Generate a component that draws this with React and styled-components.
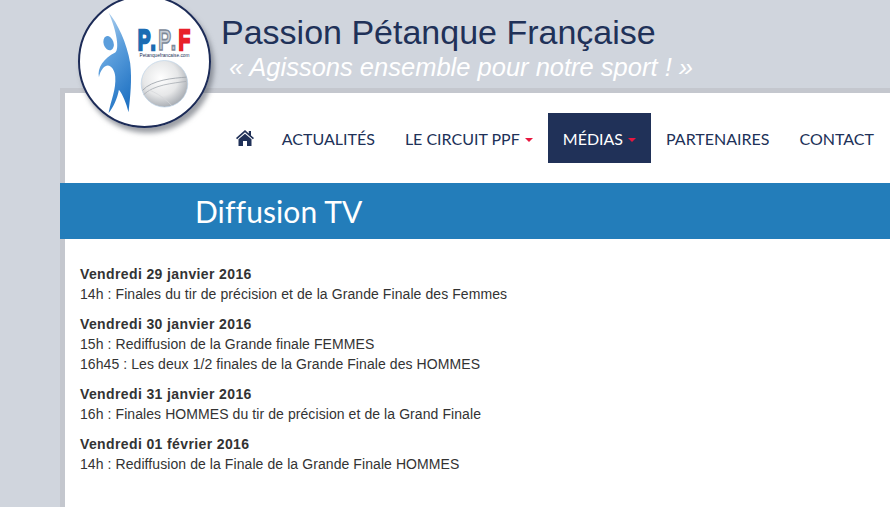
import React from "react";
import styled, { createGlobalStyle } from "styled-components";

const Global = createGlobalStyle`
  html, body { margin: 0; padding: 0; background: #d0d5dd; overflow: hidden; }
  body { font-family: "Liberation Sans", Arial, sans-serif; }
`;

const Page = styled.div`
  position: relative;
  min-height: 100vh;
  display: flex;
  flex-direction: column;
`;

const Header = styled.header`
  height: 88px;
  padding-left: 221px;
  box-sizing: border-box;
  display: flex;
  flex-direction: column;
`;

const SiteTitle = styled.h1`
  margin: 12px 0 0;
  font: 400 34px/40px "Liberation Sans", Arial, sans-serif;
  color: #203158;
`;

const Slogan = styled.p`
  margin: 0 0 0 8px;
  font: italic 400 25.5px/30px "Liberation Sans", Arial, sans-serif;
  color: #fff;
`;

const Logo = styled.div`
  position: absolute;
  left: 78px;
  top: -5px;
  width: 133px;
  height: 133px;
  border-radius: 50%;
  box-shadow: 3px 5px 5px rgba(90, 95, 105, 0.6);
  svg { display: block; }
`;

const Wrapper = styled.div`
  flex: 1;
  margin-left: 60px;
  border-top: 5px solid #c4c7ce;
  border-left: 5px solid #c4c7ce;
  background: #fff;
`;

const Nav = styled.nav`
  display: flex;
  justify-content: flex-end;
  padding: 20px 1px 20px 0;
`;

const NavItem = styled.a`
  display: flex;
  align-items: center;
  height: 50px;
  box-sizing: border-box;
  padding: 1px 15px 0;
  font: 400 16px/49px Lato, sans-serif;
  color: ${(p) => (p.$active ? "#fff" : "#203158")};
  background: ${(p) => (p.$active ? "#203158" : "transparent")};
`;

const HomeLink = styled(NavItem)`
  padding: 0 13px 0 17px;
`;

const Caret = styled.span`
  width: 0;
  height: 0;
  margin: 2px 0 0 5px;
  border-top: 4px solid #e8173f;
  border-left: 4px solid transparent;
  border-right: 4px solid transparent;
`;

const Band = styled.div`
  margin-left: -5px;
  height: 56px;
  padding-left: 135px;
  background: #237dba;
  color: #fff;
  font: 400 30px/56px Lato, sans-serif;
  letter-spacing: 0.1px;
`;

const Content = styled.main`
  padding: 25px 15px 0;
  font-size: 14px;
  line-height: 20px;
  letter-spacing: 0.08px;
  color: #333;
`;

const Day = styled.section`
  margin-bottom: 10px;
`;

const DayTitle = styled.div`
  font-weight: 700;
  letter-spacing: 0.38px;
`;

const HomeIcon = () => (
  <svg width="18" height="16" viewBox="0 0 18 16" fill="#203158">
    <path d="M9 0 L12.8 3.4 V1 H15 V5.4 L18 8.1 L16.9 9.2 L9 2.3 L1.1 9.2 L0 8.1 Z" />
    <path d="M9 3.7 L15.5 9.3 V16 H11 V11 H7 V16 H2.5 V9.3 Z" />
  </svg>
);

const LogoArt = () => (
  <svg width="133" height="133" viewBox="53 -15 400 400">
    <defs>
      <linearGradient id="fig" x1="0.2" y1="0" x2="0.6" y2="1">
        <stop offset="0" stopColor="#b5d4f0" />
        <stop offset="0.45" stopColor="#5b9edc" />
        <stop offset="1" stopColor="#2274c4" />
      </linearGradient>
      <radialGradient id="ball" cx="0.42" cy="0.38" r="0.68">
        <stop offset="0" stopColor="#ffffff" />
        <stop offset="0.55" stopColor="#e6e7e8" />
        <stop offset="1" stopColor="#9ea3aa" />
      </radialGradient>
    </defs>
    <circle cx="253" cy="185" r="197" fill="#fff" stroke="#1c2b57" strokeWidth="6" />
    <path
      d="M145 38 C172 70 200 130 210 190 C216 240 210 290 205 338 C198 310 188 285 176 270 C172 295 158 325 145 340 C152 300 168 270 165 230 C163 205 145 185 128 205 C122 212 118 222 116 232 C110 205 130 175 165 158 C178 150 170 95 145 38 Z"
      fill="url(#fig)"
    />
    <ellipse cx="145" cy="130" rx="15" ry="22" transform="rotate(-18 145 130)" fill="#5b9edc" />
    <text
      transform="translate(233 150) scale(0.64 1)"
      letterSpacing="11"
      fontFamily="Liberation Sans, Arial, sans-serif"
      fontWeight="700"
      fontSize="90"
    >
      <tspan fill="#1b6cb3" stroke="#1b6cb3" strokeWidth="7">P.</tspan>
      <tspan fill="#c8ced6" stroke="#7d8a99" strokeWidth="5">P.</tspan>
      <tspan fill="#e8202a" stroke="#e8202a" strokeWidth="7">F</tspan>
    </text>
    <text x="238" y="171" fontFamily="Liberation Sans, Arial, sans-serif" fontSize="15" textLength="150" lengthAdjust="spacingAndGlyphs" fill="#203158">
      Petanquefrancaise.com
    </text>
    <circle cx="313" cy="252" r="70" fill="url(#ball)" stroke="#bcd3e8" strokeWidth="2" />
    <path d="M247 272 C275 240 340 235 380 232" fill="none" stroke="#9ca2a9" strokeWidth="2.5" />
    <path d="M250 285 C280 255 340 250 378 245" fill="none" stroke="#a9aeb4" strokeWidth="2.5" />
    <path d="M262 270 C285 275 320 300 335 318" fill="none" stroke="#d4d6d9" strokeWidth="2" />
  </svg>
);

const days = [
  ["Vendredi 29 janvier 2016", ["14h : Finales du tir de précision et de la Grande Finale des Femmes"]],
  ["Vendredi 30 janvier 2016", ["15h : Rediffusion de la Grande finale FEMMES", "16h45 : Les deux 1/2 finales de la Grande Finale des HOMMES"]],
  ["Vendredi 31 janvier 2016", ["16h : Finales HOMMES du tir de précision et de la Grand Finale"]],
  ["Vendredi 01 février 2016", ["14h : Rediffusion de la Finale de la Grande Finale HOMMES"]],
];

export default function App() {
  return (
    <Page>
      <Global />
      <Header>
        <SiteTitle>Passion Pétanque Française</SiteTitle>
        <Slogan>« Agissons ensemble pour notre sport ! »</Slogan>
      </Header>
      <Wrapper>
        <Nav>
          <HomeLink><HomeIcon /></HomeLink>
          <NavItem>ACTUALITÉS</NavItem>
          <NavItem>LE CIRCUIT PPF<Caret /></NavItem>
          <NavItem $active>MÉDIAS<Caret /></NavItem>
          <NavItem>PARTENAIRES</NavItem>
          <NavItem>CONTACT</NavItem>
        </Nav>
        <Band>Diffusion TV</Band>
        <Content>
          {days.map(([title, lines]) => (
            <Day key={title}>
              <DayTitle>{title}</DayTitle>
              {lines.map((l) => <div key={l}>{l}</div>)}
            </Day>
          ))}
        </Content>
      </Wrapper>
      <Logo><LogoArt /></Logo>
    </Page>
  );
}
